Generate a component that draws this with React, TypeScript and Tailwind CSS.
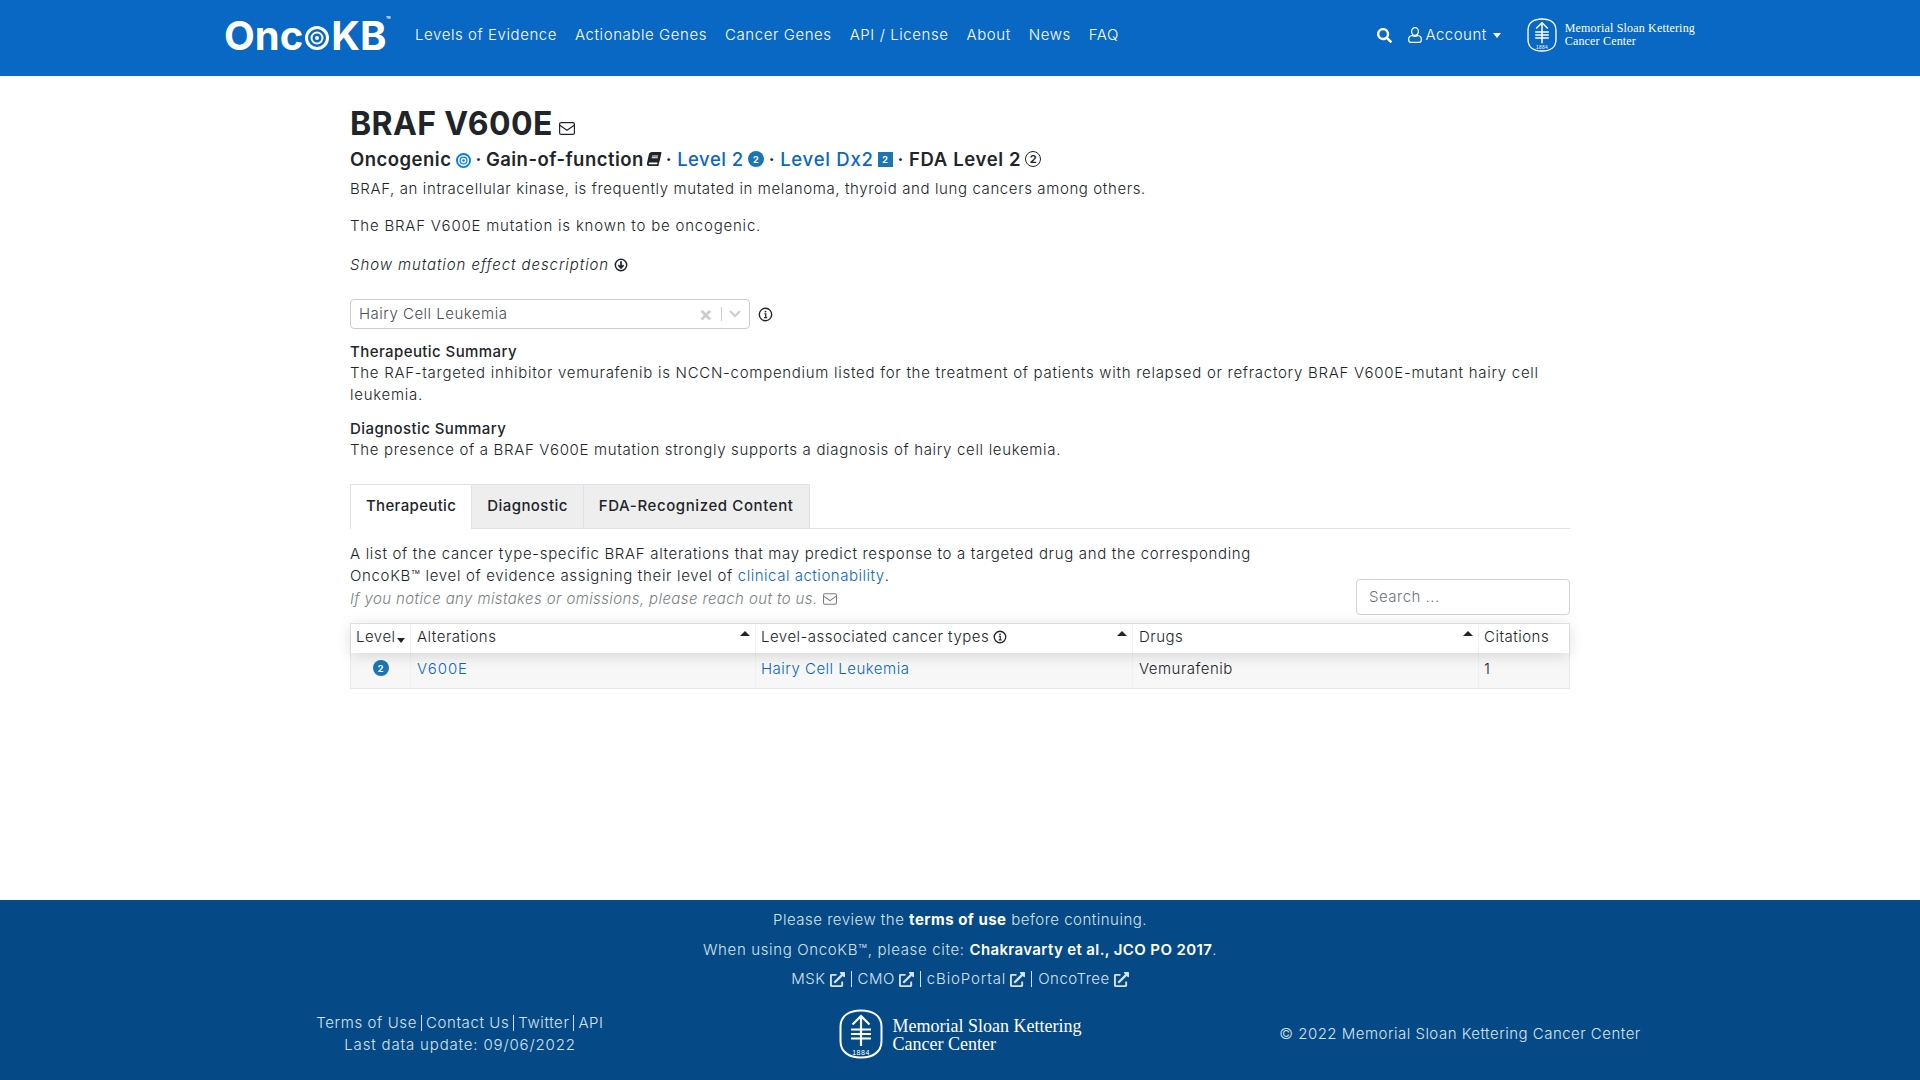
import { FaBook, FaSearch, FaExternalLinkAlt } from "react-icons/fa";

function Target({ className }: { className: string }) {
  return (
    <svg viewBox="0 0 24 24" className={className}>
      <circle cx="12" cy="12" r="10.5" fill="none" stroke="currentColor" strokeWidth="3" />
      <circle cx="12" cy="12" r="5.5" fill="none" stroke="currentColor" strokeWidth="2" />
      <circle cx="12" cy="12" r="2" fill="currentColor" />
    </svg>
  );
}

function InfoIcon({ className }: { className: string }) {
  return (
    <svg viewBox="0 0 16 16" className={className} fill="none" stroke="currentColor">
      <circle cx="8" cy="8" r="6.6" strokeWidth="1.5" />
      <circle cx="8" cy="4.9" r="1" fill="currentColor" stroke="none" />
      <path d="M6.6 7.2H8.3V11.2M6.6 11.3H9.8" strokeWidth="1.3" />
    </svg>
  );
}

function DownCircle({ className }: { className: string }) {
  return (
    <svg viewBox="0 0 16 16" className={className} fill="none" stroke="currentColor">
      <circle cx="8" cy="8" r="6.5" strokeWidth="1.7" />
      <path d="M8 3.8V11M5 8.2L8 11.4L11 8.2" strokeWidth="2" />
    </svg>
  );
}

function Envelope({ className }: { className: string }) {
  return (
    <svg viewBox="0 0 16 13" className={className} fill="none" stroke="currentColor" strokeWidth="1.2">
      <rect x="0.6" y="0.6" width="14.8" height="11.8" rx="1.500" />
      <path d="M0.8 3.200L8 8.300L15.200 3.200" />
    </svg>
  );
}

function UserIcon({ className }: { className: string }) {
  return (
    <svg viewBox="0 0 14 16" className={className} fill="none" stroke="currentColor" strokeWidth="1.200">
      <ellipse cx="7" cy="4.500" rx="3.400" ry="3.900" />
      <path d="M4.200 8.500C2 8.800 0.700 10.200 0.700 12.200V13C0.700 14.300 1.500 15.300 3 15.300H11C12.500 15.300 13.300 14.300 13.300 13V12.200C13.300 10.200 12 8.800 9.800 8.500C8.200 9.500 5.800 9.500 4.200 8.500Z" />
    </svg>
  );
}

function MskLogo({ className }: { className: string }) {
  return (
    <svg viewBox="0 0 44 50" className={className} fill="none" stroke="currentColor">
      <path d="M22 1.500C33 1.500 42.500 6 42.500 18V32C42.500 43 34 48.500 22 48.500C10 48.500 1.500 43 1.500 32V18C1.500 6 11 1.500 22 1.500Z" strokeWidth="2" />
      <path d="M22 7V37" strokeWidth="2.200" />
      <path d="M13.500 15.500L22 7L30.500 15.500" strokeWidth="2.200" />
      <path d="M12 20.500H32M12 25H32M12 29.500H32" strokeWidth="2.200" />
      <text x="22" y="46" fontSize="7" textAnchor="middle" fill="currentColor" stroke="none" fontFamily="Liberation Sans, sans-serif" letterSpacing="0.5">1884</text>
    </svg>
  );
}

function Sep() {
  return <span className="mx-[4px] inline-block h-[16px] w-px bg-current align-[-2px]" />;
}

function ExtLink({ label, wide }: { label: string; wide?: boolean }) {
  return (
    <span className="inline-flex items-center gap-[4px]">
      <span className={wide ? "tracking-[0.058em]" : ""}>{label}</span>
      <FaExternalLinkAlt className="size-[15px]" />
    </span>
  );
}

function SortUp() {
  return <span className="absolute right-[5px] top-[7px] h-0 w-0 border-x-[5px] border-b-[5px] border-x-transparent border-b-[#212529]" />;
}

const font = { fontFamily: '"Inter", "Liberation Sans", sans-serif' };

export default function App() {
  return (
    <div className="flex min-h-[1080px] flex-col bg-white text-[15px] font-[350] leading-[22px] tracking-[0.033em] text-[#212529]" style={font}>
      <header className="flex h-[76px] shrink-0 justify-center bg-[#0968c3] text-white">
        <div className="flex h-[70px] w-[1472px] items-center pr-[1px]">
          <div className="relative flex w-[191px] translate-y-[1px] items-center text-[40px] font-bold leading-[40px] tracking-[0em]">
            <span>Onc</span>
            <Target className="mx-[2px] size-[24px] translate-y-[2px]" />
            <span>KB</span>
            <span className="absolute left-[162px] top-[-1px] text-[7px] leading-[10px] tracking-normal">™</span>
          </div>
          <nav className="flex gap-[18px] tracking-[0.038em]">
            {["Levels of Evidence", "Actionable Genes", "Cancer Genes", "API / License", "About", "News", "FAQ"].map((t) => (
              <span key={t}>{t}</span>
            ))}
          </nav>
          <div className="ml-auto flex items-center">
            <FaSearch className="size-[15px]" />
            <UserIcon className="ml-[16px] h-[16px] w-[14px]" />
            <span className="ml-[3px]">Account</span>
            <span className="ml-[6px] h-0 w-0 border-x-[4px] border-t-[5px] border-x-transparent border-t-white" />
            <MskLogo className="ml-[26px] h-[36px] w-[30px]" />
            <div className="ml-[8px] text-[12px] leading-[13px] tracking-[0.015em]" style={{ fontFamily: '"Liberation Serif", serif' }}>
              <div>Memorial Sloan Kettering</div>
              <div>Cancer Center</div>
            </div>
          </div>
        </div>
      </header>

      <main className="mx-auto flex w-[1220px] grow flex-col pt-[31px]">
        <div className="flex items-end gap-[6px]">
          <h1 className="text-[32px] font-bold leading-[34px] tracking-[0.012em]">BRAF V600E</h1>
          <Envelope className="mb-[6px] h-[13px] w-[16px]" />
        </div>
        <div className="mt-[5px] flex h-[26px] items-center text-[18.5px] font-semibold leading-[26px]">
          <span>Oncogenic</span>
          <Target className="ml-[5px] size-[15px] translate-y-[1px] text-[#007bff]" />
          <span className="mx-[4px]">·</span>
          <span className="tracking-[0.025em]">Gain-of-function</span>
          <FaBook className="ml-[3px] size-[14px] -skew-x-12" />
          <span className="mx-[5px]">·</span>
          <span className="font-medium text-[#0968c3]">Level 2</span>
          <span className="ml-[4px] flex size-[16px] items-center justify-center rounded-full bg-[#1a75b5] text-[9px] font-bold leading-none tracking-normal text-white">2</span>
          <span className="mx-[5px]">·</span>
          <span className="font-medium tracking-[0.04em] text-[#0968c3]">Level Dx2</span>
          <span className="ml-[4px] flex size-[15px] items-center justify-center bg-[#1a75b5] text-[9px] font-bold leading-none tracking-normal text-white">2</span>
          <span className="mx-[5px]">·</span>
          <span className="tracking-[0.035em]">FDA Level 2</span>
          <span className="ml-[4px] flex size-[16px] items-center justify-center rounded-full border-[1.5px] border-[#212529] text-[11px] font-bold leading-none tracking-normal">2</span>
        </div>
        <p className="mt-[6px] tracking-[0.041em]">BRAF, an intracellular kinase, is frequently mutated in melanoma, thyroid and lung cancers among others.</p>
        <p className="mt-[15px] tracking-[0.053em]">The BRAF V600E mutation is known to be oncogenic.</p>
        <p className="mt-[17px] flex items-center gap-[5px] italic tracking-[0.061em]">
          Show mutation effect description
          <DownCircle className="size-[14px]" />
        </p>

        <div className="mt-[23px] flex items-center">
          <div className="flex h-[30px] w-[400px] items-center rounded-[4px] border border-[#ccc] pl-[8px] pr-[8px] text-[#4a4f54]">
            <span className="grow">Hairy Cell Leukemia</span>
            <span className="text-[20px] font-bold leading-none text-[#ccc]">×</span>
            <span className="ml-[8px] h-[14px] w-px bg-[#ccc]" />
            <svg viewBox="0 0 12 8" className="ml-[7px] h-[8px] w-[12px] text-[#ccc]" fill="none" stroke="currentColor" strokeWidth="2"><path d="M1 1L6 6L11 1" /></svg>
          </div>
          <InfoIcon className="ml-[8px] size-[15px]" />
        </div>

        <div className="mt-[12px] h-[21px] font-medium tracking-[0.028em]">Therapeutic Summary</div>
        <p className="tracking-[0.048em]">The RAF-targeted inhibitor vemurafenib is NCCN-compendium listed for the treatment of patients with relapsed or refractory BRAF V600E-mutant hairy cell leukemia.</p>
        <div className="mt-[12px] h-[21px] font-medium tracking-[0.028em]">Diagnostic Summary</div>
        <p className="tracking-[0.045em]">The presence of a BRAF V600E mutation strongly supports a diagnosis of hairy cell leukemia.</p>

        <div className="mt-[23px] flex h-[45px] border-b border-[#dee2e6] font-medium tracking-[0.022em]">
          <span className="-mb-px flex items-center border border-b-0 border-[#dee2e6] bg-white px-[15px] pb-[2px]">Therapeutic</span>
          <span className="flex items-center border-y border-r border-b-0 border-[#dee2e6] bg-[#eee] px-[15px] pb-[2px] tracking-[0.03em]">Diagnostic</span>
          <span className="flex items-center border-y border-r border-b-0 border-[#dee2e6] bg-[#eee] px-[15px] pb-[2px] tracking-[0.04em]">FDA-Recognized Content</span>
        </div>

        <div className="mt-[14px] flex items-end justify-between">
          <div className="w-[940px] pb-[5px]">
            <p className="tracking-[0.045em]">A list of the cancer type-specific BRAF alterations that may predict response to a targeted drug and the corresponding OncoKB™ level of evidence assigning their level of <span className="tracking-[0.035em] text-[#0968c3]">clinical actionability</span>.</p>
            <p className="mt-[1px] flex items-center gap-[5px] italic tracking-[0.026em] text-[#7b7f83]">
              If you notice any mistakes or omissions, please reach out to us.
              <Envelope className="h-[12px] w-[14px]" />
            </p>
          </div>
          <div className="flex h-[36px] w-[214px] items-center rounded-[4px] border border-[#ced4da] px-[12px] text-[#6c757d]">Search ...</div>
        </div>

        <div className="mt-[8px] border border-[#e8e8e8]">
          <div className="relative z-10 grid h-[29px] grid-cols-[60px_345px_377px_346px_1fr] items-center bg-white shadow-[0_2px_15px_0_rgba(0,0,0,0.15)]">
            <div className="relative flex h-full items-center border-r border-[#f0f0f0] px-[5px] pb-[3px]">
              Level
              <span className="absolute right-[5px] top-[14px] h-0 w-0 border-x-[4px] border-t-[5px] border-x-transparent border-t-[#212529]" />
            </div>
            <div className="relative flex h-full items-center border-r border-[#f0f0f0] pb-[3px] pl-[6px]">Alterations<SortUp /></div>
            <div className="relative flex h-full items-center gap-[4px] border-r border-[#f0f0f0] px-[5px] pb-[3px]">Level-associated cancer types<InfoIcon className="size-[14px]" /><SortUp /></div>
            <div className="relative flex h-full items-center border-r border-[#f0f0f0] pb-[3px] pl-[6px]">Drugs<SortUp /></div>
            <div className="flex h-full items-center px-[5px] pb-[3px]">Citations</div>
          </div>
          <div className="grid h-[35px] grid-cols-[60px_345px_377px_346px_1fr] items-center bg-[#f7f7f7]">
            <div className="flex h-full justify-center border-r border-[#f0f0f0] pt-[7px]">
              <span className="flex size-[16px] items-center justify-center rounded-full bg-[#1a75b5] text-[9px] font-bold leading-none tracking-normal text-white">2</span>
            </div>
            <div className="flex h-full items-center border-r border-[#f0f0f0] pb-[3px] pl-[6px] tracking-[0.06em] text-[#0968c3]">V600E</div>
            <div className="flex h-full items-center border-r border-[#f0f0f0] px-[5px] pb-[3px] text-[#0968c3]">Hairy Cell Leukemia</div>
            <div className="flex h-full items-center border-r border-[#f0f0f0] pb-[3px] pl-[6px]">Vemurafenib</div>
            <div className="flex h-full items-center px-[5px] pb-[3px]">1</div>
          </div>
        </div>
      </main>

      <footer className="flex h-[180px] shrink-0 flex-col items-center bg-[#054a87] pt-[9px] text-[#d6e2ee]">
        <div className="h-[22px]">Please review the <b className="font-bold text-white">terms of use</b> before continuing.</div>
        <div className="mt-[8px] h-[22px] tracking-[0.043em]">When using OncoKB™, please cite: <b className="font-semibold tracking-[0.025em] text-white">Chakravarty et al., JCO PO 2017</b>.</div>
        <div className="mt-[7px] flex h-[22px] items-center gap-[2px]">
          <ExtLink label="MSK" /><Sep /><ExtLink label="CMO" /><Sep /><ExtLink label="cBioPortal" wide /><Sep /><ExtLink label="OncoTree" />
        </div>
        <div className="mt-[19px] grid w-[1500px] grid-cols-3 items-center">
          <div className="text-center">
            <div className="flex items-center justify-center tracking-[0.04em]">Terms of Use<Sep />Contact Us<Sep />Twitter<Sep />API</div>
            <div className="tracking-[0.056em]">Last data update: 09/06/2022</div>
          </div>
          <div className="flex items-center justify-center text-white">
            <MskLogo className="h-[50px] w-[44px]" />
            <div className="ml-[10px] pt-[2px] text-[18px] leading-[18px] tracking-[0]" style={{ fontFamily: '"Liberation Serif", serif' }}>
              <div>Memorial Sloan Kettering</div>
              <div>Cancer Center</div>
            </div>
          </div>
          <div className="text-center">© 2022 Memorial Sloan Kettering Cancer Center</div>
        </div>
      </footer>
    </div>
  );
}
